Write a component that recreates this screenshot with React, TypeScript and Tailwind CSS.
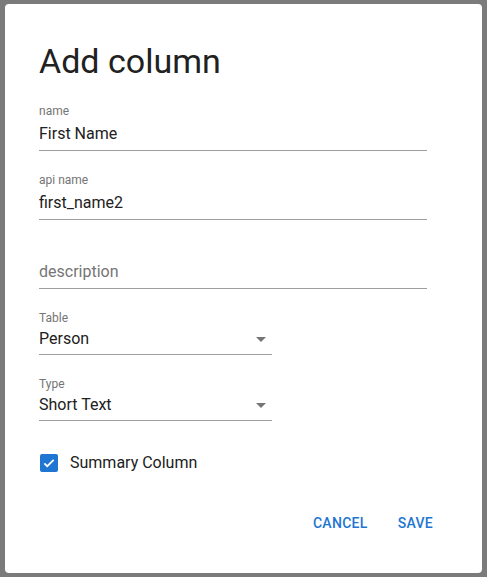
export default function App() {
  const Caret = () => (
    <svg width="10" height="5" viewBox="0 0 10 5" className="mr-[6px]"><path d="M0 0h10L5 5z" fill="#757575" /></svg>
  );
  return (
    <div className="w-[487px] h-[577px] bg-[#7b7b7b] p-[4px] pl-[5px] pr-[5px]" style={{ fontFamily: "Roboto, sans-serif" }}>
      <div className="w-[477px] h-[569px] bg-white rounded-[4px] pl-[34px] pr-[55px] text-[#212121] flex flex-col">
        <div className="mt-[35px] h-[44px] text-[34px] leading-[44px] font-normal">Add column</div>
        <div className="mt-[21px] h-[47px] border-b border-[#9e9e9e] w-[388px]">
          <div className="text-[12px] leading-[14px] text-[#757575]">name</div>
          <div className="text-[16px] leading-[20px] mt-[6px]">First Name</div>
        </div>
        <div className="mt-[22px] h-[47px] border-b border-[#9e9e9e] w-[388px]">
          <div className="text-[12px] leading-[14px] text-[#757575]">api name</div>
          <div className="text-[16px] leading-[20px] mt-[6px]">first_name2</div>
        </div>
        <div className="mt-[22px] h-[47px] border-b border-[#9e9e9e] w-[388px] flex items-end pb-[6px]">
          <div className="text-[16px] leading-[20px] text-[#757575]">description</div>
        </div>
        <div className="mt-[22px] h-[44px] border-b border-[#9e9e9e] w-[233px]">
          <div className="text-[12px] leading-[14px] text-[#757575]">Table</div>
          <div className="flex items-center justify-between mt-[4px]">
            <span className="text-[16px] leading-[20px]">Person</span><Caret />
          </div>
        </div>
        <div className="mt-[22px] h-[44px] border-b border-[#9e9e9e] w-[233px]">
          <div className="text-[12px] leading-[14px] text-[#757575]">Type</div>
          <div className="flex items-center justify-between mt-[4px]">
            <span className="text-[16px] leading-[20px]">Short Text</span><Caret />
          </div>
        </div>
        <div className="mt-[32px] flex items-center gap-[12px] pl-[1px]">
          <div className="w-[18px] h-[18px] bg-[#1e76d2] rounded-[2px] flex items-center justify-center">
            <svg width="14" height="14" viewBox="0 0 24 24"><path d="M4 12.5l5 5L20 6.5" stroke="white" strokeWidth="3" fill="none" /></svg>
          </div>
          <span className="text-[16px] leading-[20px]">Summary Column</span>
        </div>
        <div className="mt-[40px] flex justify-end gap-[30px] text-[14px] tracking-[0.3px] text-[#1e76d2] font-medium pr-[-10px] mr-[-6px]">
          <span>CANCEL</span><span>SAVE</span>
        </div>
      </div>
    </div>
  );
}
